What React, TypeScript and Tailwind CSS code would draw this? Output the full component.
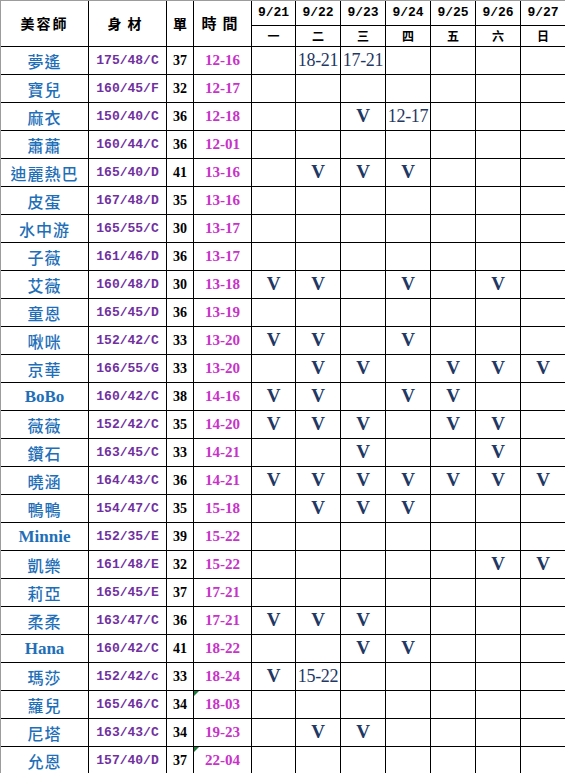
import React from 'react';

type Row = {
  name: string;
  body: string;
  count: string;
  time: string;
  days: string[];
  flag?: boolean;
};

const E = ['', '', '', '', '', '', ''];

const rows: Row[] = [
  { name: '夢遙', body: '175/48/C', count: '37', time: '12-16', days: ['', '18-21', '17-21', '', '', '', ''] },
  { name: '寶兒', body: '160/45/F', count: '32', time: '12-17', days: E },
  { name: '麻衣', body: '150/40/C', count: '36', time: '12-18', days: ['', '', 'V', '12-17', '', '', ''] },
  { name: '蕭蕭', body: '160/44/C', count: '36', time: '12-01', days: E },
  { name: '迪麗熱巴', body: '165/40/D', count: '41', time: '13-16', days: ['', 'V', 'V', 'V', '', '', ''] },
  { name: '皮蛋', body: '167/48/D', count: '35', time: '13-16', days: E },
  { name: '水中游', body: '165/55/C', count: '30', time: '13-17', days: E },
  { name: '子薇', body: '161/46/D', count: '36', time: '13-17', days: E },
  { name: '艾薇', body: '160/48/D', count: '30', time: '13-18', days: ['V', 'V', '', 'V', '', 'V', ''] },
  { name: '童恩', body: '165/45/D', count: '36', time: '13-19', days: E },
  { name: '啾咪', body: '152/42/C', count: '33', time: '13-20', days: ['V', 'V', '', 'V', '', '', ''] },
  { name: '京華', body: '166/55/G', count: '33', time: '13-20', days: ['', 'V', 'V', '', 'V', 'V', 'V'] },
  { name: 'BoBo', body: '160/42/C', count: '38', time: '14-16', days: ['V', 'V', '', 'V', 'V', '', ''] },
  { name: '薇薇', body: '152/42/C', count: '35', time: '14-20', days: ['V', 'V', 'V', '', 'V', 'V', ''] },
  { name: '鑽石', body: '163/45/C', count: '33', time: '14-21', days: ['', '', 'V', '', '', 'V', ''] },
  { name: '曉涵', body: '164/43/C', count: '36', time: '14-21', days: ['V', 'V', 'V', 'V', 'V', 'V', 'V'] },
  { name: '鴨鴨', body: '154/47/C', count: '35', time: '15-18', days: ['', 'V', 'V', 'V', '', '', ''] },
  { name: 'Minnie', body: '152/35/E', count: '39', time: '15-22', days: E },
  { name: '凱樂', body: '161/48/E', count: '32', time: '15-22', days: ['', '', '', '', '', 'V', 'V'] },
  { name: '莉亞', body: '165/45/E', count: '37', time: '17-21', days: E },
  { name: '柔柔', body: '163/47/C', count: '36', time: '17-21', days: ['V', 'V', 'V', '', '', '', ''] },
  { name: 'Hana', body: '160/42/C', count: '41', time: '18-22', days: ['', '', 'V', 'V', '', '', ''] },
  { name: '瑪莎', body: '152/42/c', count: '33', time: '18-24', days: ['V', '15-22', '', '', '', '', ''] },
  { name: '蘿兒', body: '165/46/C', count: '34', time: '18-03', days: E, flag: true },
  { name: '尼塔', body: '163/43/C', count: '34', time: '19-23', days: ['', 'V', 'V', '', '', '', ''] },
  { name: '允恩', body: '157/40/D', count: '37', time: '22-04', days: E, flag: true },
];

const dates = ['9/21', '9/22', '9/23', '9/24', '9/25', '9/26', '9/27'];
const weekdays = ['一', '二', '三', '四', '五', '六', '日'];

const cjk = "font-['Noto_Sans_CJK_TC',sans-serif]";
const serif = "font-['Liberation_Serif',serif]";
const mono = "font-['Liberation_Mono',monospace]";

function DayCell({ value }: { value: string }) {
  if (value === 'V') {
    return (
      <div className={`bg-white flex items-center justify-center ${serif} font-bold text-[19px] text-[#1f3864]`}>
        V
      </div>
    );
  }
  return (
    <div className={`bg-white flex items-center justify-center whitespace-nowrap overflow-visible ${serif} text-[18px] text-[#1f3864] tracking-[-0.3px]`}>
      {value}
    </div>
  );
}

export default function App() {
  return (
    <div className="w-[565px] h-[773px] overflow-hidden bg-white">
      <div className="grid grid-cols-[87px_77px_26px_57px_43px_44px_44px_44px_44px_44px_44px] grid-rows-[24px_20px] auto-rows-[27px] gap-px bg-black border-l border-t border-[#9c9c9c]">
        <div className={`row-span-2 bg-white flex items-center justify-center ${cjk} font-bold text-[14px] tracking-[2px] text-black`}>
          美容師
        </div>
        <div className={`row-span-2 bg-white flex items-center justify-center ${cjk} font-bold text-[14px] tracking-[6px] text-black`}>
          身材
        </div>
        <div className={`row-span-2 bg-white flex items-center justify-center ${cjk} font-bold text-[14px] text-black`}>
          單
        </div>
        <div className={`row-span-2 bg-white flex items-center justify-center ${cjk} font-bold text-[15px] tracking-[6px] text-black`}>
          時間
        </div>
        {dates.map((d) => (
          <div key={d} className={`bg-white flex items-center justify-center ${mono} font-bold text-[13px] text-black`}>
            {d}
          </div>
        ))}
        {weekdays.map((w) => (
          <div key={w} className={`bg-white flex items-center justify-center ${cjk} font-bold text-[12px] text-black`}>
            {w}
          </div>
        ))}

        {rows.map((r) => (
          <React.Fragment key={r.name}>
            <div className={`bg-white flex items-center justify-center text-[16px] text-[#1f6fb8] ${/[A-Za-z]/.test(r.name) ? `${serif} font-bold text-[17px]` : `${cjk} font-medium tracking-[1px]`}`}>
              {r.name}
            </div>
            <div className={`bg-white flex items-center justify-center ${mono} font-bold text-[13px] text-[#7030a0]`}>
              {r.body}
            </div>
            <div className={`bg-white flex items-center justify-center ${serif} font-bold text-[14px] text-black`}>
              {r.count}
            </div>
            <div className={`relative bg-white flex items-center justify-center ${serif} font-bold text-[15px] text-[#c832c8]`}>
              {r.flag && (
                <span className="absolute left-0 top-0 w-0 h-0 border-t-[5px] border-r-[5px] border-t-[#1c7a3a] border-r-transparent" />
              )}
              {r.time}
            </div>
            {r.days.map((d, i) => (
              <DayCell key={i} value={d} />
            ))}
          </React.Fragment>
        ))}
      </div>
    </div>
  );
}
